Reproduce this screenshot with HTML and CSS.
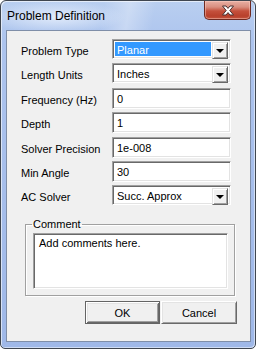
FILE: index.html
```html
<!DOCTYPE html>
<html>
<head>
<meta charset="utf-8">
<link rel="stylesheet" href="styles.css">
</head>
<body>
<div class="window">
  <div class="titlebar">
    <span class="title">Problem Definition</span>
    <div class="close">
      <svg width="14" height="11" viewBox="0 0 14 11"><path d="M1.5 1 L5 1 L7 3.4 L9 1 L12.5 1 L8.8 5.5 L12.5 10 L9 10 L7 7.6 L5 10 L1.5 10 L5.2 5.5 Z" fill="#fff" stroke="#4a3030" stroke-width="1" stroke-linejoin="round"/></svg>
    </div>
  </div>
  <div class="client">
    <div class="form">
      <label class="lbl">Problem Type</label>
      <div class="combo"><span class="value sel">Planar</span><span class="drop"><i class="arrow"></i></span></div>
      <label class="lbl">Length Units</label>
      <div class="combo"><span class="value">Inches</span><span class="drop"><i class="arrow"></i></span></div>
      <label class="lbl">Frequency (Hz)</label>
      <div class="edit">0</div>
      <label class="lbl">Depth</label>
      <div class="edit">1</div>
      <label class="lbl">Solver Precision</label>
      <div class="edit">1e-008</div>
      <label class="lbl">Min Angle</label>
      <div class="edit">30</div>
      <label class="lbl">AC Solver</label>
      <div class="combo"><span class="value">Succ. Approx</span><span class="drop"><i class="arrow"></i></span></div>
    </div>
    <fieldset class="group">
      <legend class="legend">Comment</legend>
      <div class="memo">Add comments here.</div>
    </fieldset>
    <div class="buttons">
      <button class="btn default">OK</button>
      <button class="btn">Cancel</button>
    </div>
  </div>
</div>
</body>
</html>
```

FILE: styles.css
```css
html, body {
  margin: 0;
  padding: 0;
  background: #ffffff;
}
body {
  width: 256px;
  height: 349px;
  overflow: hidden;
  font-family: "Liberation Sans", Arial, sans-serif;
  font-size: 11px;
  color: #000;
}
.window {
  box-sizing: border-box;
  width: 256px;
  height: 349px;
  border: 1px solid #3f4650;
  border-radius: 6px 6px 5px 5px;
  background: linear-gradient(to bottom, #b9cff0 0px, #adc4ee 40px, #9fb8e8 100%);
  box-shadow: inset 1px 1px 0 rgba(255,255,255,0.6), inset -1px -1px 0 rgba(255,255,255,0.5);
  padding: 0 4px 6px 5px;
  display: flex;
  flex-direction: column;
}
.titlebar {
  height: 29px;
  display: flex;
  justify-content: space-between;
  align-items: flex-start;
  background:
    radial-gradient(ellipse 70px 16px at 55px 16px, rgba(232,240,252,0.85), rgba(232,240,252,0) 100%),
    linear-gradient(100deg, rgba(255,255,255,0) 40%, rgba(255,255,255,0.3) 50%, rgba(255,255,255,0) 60%);
  margin: 0 -4px 0 -5px;
  padding: 0 4px 0 6px;
}
.title {
  font-size: 12px;
  line-height: 14px;
  margin-top: 8px;
  color: #000;
}
.close {
  width: 45px;
  height: 18px;
  border: 1px solid #6e2a22;
  border-top: none;
  border-radius: 0 0 5px 5px;
  background: linear-gradient(to bottom, #e8b0a4 0px, #d98f80 6px, #c4503c 10px, #b8402c 15px, #c85a44 19px);
  box-shadow: inset 0 0 0 1px rgba(255,210,200,0.45);
  display: flex;
  align-items: center;
  justify-content: center;
}
.close svg { display: block; margin-top: 1px; }
.client {
  flex: 1;
  background: #f0f0f0;
  border: 1px solid #7f8ea8;
  display: flex;
  flex-direction: column;
}
.form {
  display: grid;
  grid-template-columns: 91px 119px;
  grid-template-rows: 20px 21px 20px 21px 20px 20px 20px;
  row-gap: 4px;
  margin: 8px 0 0 14px;
}
.lbl {
  display: flex;
  align-items: center;
  padding-top: 3px;
  height: 20px;
  box-sizing: border-box;
  white-space: nowrap;
}
.combo, .edit, .memo {
  box-sizing: border-box;
  border: 1px solid;
  border-color: #a0a0a0 #ffffff #ffffff #a0a0a0;
  box-shadow: inset 1px 1px 0 #696969, inset -1px -1px 0 #e3e3e3;
  background: #fff;
}
.combo {
  height: 20px;
  padding: 2px;
  display: flex;
}
.value {
  flex: 1;
  line-height: 16px;
  padding-left: 2px;
}
.value.sel {
  background: #3399ff;
  color: #fff;
}
.drop {
  width: 16px;
  height: 17px;
  margin-left: 1px;
  box-sizing: border-box;
  background: #f0f0f0;
  border: 1px solid;
  border-color: #e3e3e3 #696969 #696969 #e3e3e3;
  box-shadow: inset 1px 1px 0 #ffffff, inset -1px -1px 0 #a0a0a0;
  display: flex;
  align-items: center;
  justify-content: center;
}
.arrow {
  width: 0;
  height: 0;
  border-left: 4px solid transparent;
  border-right: 4px solid transparent;
  border-top: 4px solid #000;
  margin-top: 1px;
}
.edit {
  height: 21px;
  padding: 2px 4px;
  line-height: 16px;
}
.group {
  margin: 13px 0 0 18px;
  width: 210px;
  box-sizing: border-box;
  padding: 0 0 0 7px;
  border: 1px solid #a0a0a0;
  box-shadow: inset 1px 1px 0 #fff, 1px 1px 0 #fff;
  height: 78px;
}
.legend {
  padding: 0 1px;
  margin-left: -1px;
  line-height: 13px;
}
.memo {
  width: 195px;
  height: 56px;
  margin-top: 2px;
  padding: 3px 5px;
  line-height: 13px;
}
.buttons {
  display: flex;
  margin: 5px 0 0 78px;
}
.btn {
  font-family: "Liberation Sans", Arial, sans-serif;
  font-size: 11px;
  color: #000;
  height: 23px;
  width: 75px;
  margin: 0 1px 0 0;
  padding: 0;
  box-sizing: border-box;
  background: #f0f0f0;
  border: 1px solid;
  border-color: #ffffff #696969 #696969 #ffffff;
  box-shadow: inset 1px 1px 0 #e3e3e3, inset -1px -1px 0 #a0a0a0;
}
.btn.default {
  border-color: #646464;
  box-shadow: inset 1px 1px 0 #ffffff, inset -1px -1px 0 #696969, inset 2px 2px 0 #e3e3e3, inset -2px -2px 0 #a0a0a0;
}
.btn + .btn { width: 76px; }
```
